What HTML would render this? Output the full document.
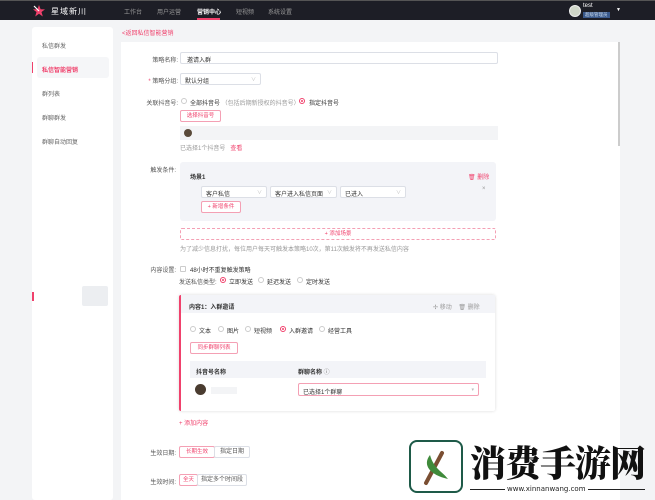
<!DOCTYPE html><html><head><meta charset="utf-8"><style>
*{margin:0;padding:0;box-sizing:border-box}
body{width:655px;height:500px;overflow:hidden;background:#f3f4f6;font-family:"Liberation Sans","Noto Sans CJK SC",sans-serif;font-size:6px;color:#333;position:relative}
.a{position:absolute;white-space:nowrap}
.hdr{left:0;top:0;width:655px;height:20px;background:#1d1e26;border-top:1px solid #555}
.nav{color:#999;top:7px;font-size:6px}
.box{position:absolute;border:1px solid #dcdfe6;background:#fff;border-radius:2px}
.pk{color:#f0416c}
.pbtn{position:absolute;border:1px solid #f4a0b4;color:#f0416c;background:#fff;border-radius:2px;text-align:center;font-size:5.5px}
.lbl{color:#555;text-align:right;width:60px}
.r{position:absolute;width:6px;height:6px;border:1px solid #ccc;border-radius:50%;background:#fff}
.r.on{border-color:#f0416c}
.r.on:after{content:"";position:absolute;left:1px;top:1px;width:2px;height:2px;border-radius:50%;background:#f0416c}
.car{position:absolute;right:4px;top:2px;color:#bbb;font-size:5px}
.g{color:#999}
</style></head><body>
<div class="a hdr"></div>
<svg class="a" style="left:32px;top:4px" width="14" height="14" viewBox="0 0 14 14"><polygon points="7,1 8.6,5.2 13,5.4 9.5,8 10.8,12.5 7,9.8 3.2,12.5 4.5,8 1,5.4 5.4,5.2" fill="#f0416c"/><path d="M2 2 L7 7" stroke="#fff" stroke-width="1.2"/></svg>
<div class="a" style="left:51px;top:6px;color:#fff;font-size:8px;letter-spacing:1px">星域新川</div>
<div class="a nav" style="left:124px">工作台</div>
<div class="a nav" style="left:157px">用户运营</div>
<div class="a nav" style="left:197px;color:#fff;font-weight:bold">营销中心</div>
<div class="a" style="left:197px;top:18px;width:23px;height:2px;background:#f0416c"></div>
<div class="a nav" style="left:236px">短视频</div>
<div class="a nav" style="left:268px">系统设置</div>
<div class="a" style="left:569px;top:5px;width:12px;height:12px;border-radius:50%;background:#cfd6c8;border:1px solid #eee"></div>
<div class="a" style="left:583px;top:3px;color:#fff;font-size:6px">test</div>
<div class="a" style="left:583px;top:12px;background:#3b5a8c;color:#cde;font-size:4.5px;padding:0 2px">超级管理员</div>
<div class="a" style="left:616px;top:7px;color:#fff;font-size:5px">▼</div>

<div class="a" style="left:32px;top:27px;width:81px;height:473px;background:#fff;border-radius:3px"></div>
<div class="a" style="left:37px;top:57px;width:72px;height:21px;background:#f5f6f8;border-radius:3px"></div>
<div class="a" style="left:32px;top:62px;width:1px;height:11px;background:#f0416c"></div>
<div class="a" style="left:42px;top:41px;color:#666">私信群发</div>
<div class="a pk" style="left:42px;top:65px;font-weight:bold">私信智能营销</div>
<div class="a" style="left:42px;top:89px;color:#666">群列表</div>
<div class="a" style="left:42px;top:113px;color:#666">群聊群发</div>
<div class="a" style="left:42px;top:137px;color:#666">群聊自动回复</div>
<div class="a" style="left:32px;top:292px;width:2px;height:9px;background:#f0416c"></div>
<div class="a" style="left:82px;top:286px;width:26px;height:20px;background:#eceef1;border-radius:2px"></div>

<div class="a pk" style="left:122px;top:28px">&lt;返回私信智能营销</div>
<div class="a" style="left:121px;top:42px;width:499px;height:458px;background:#fff"></div>
<div class="a" style="left:618px;top:42px;width:2px;height:104px;background:#ccc"></div>
<div class="a" style="left:620px;top:42px;width:35px;height:458px;background:#f3f4f6"></div>

<div class="a lbl" style="left:118px;top:55px">策略名称:</div>
<div class="box" style="left:180px;top:52px;width:318px;height:12px"><span class="a" style="left:6px;top:2px">邀请入群</span></div>
<div class="a lbl" style="left:118px;top:76px"><span class="pk">* </span>策略分组:</div>
<div class="box" style="left:180px;top:73px;width:81px;height:12px"><span class="a" style="left:4px;top:2px">默认分组</span><span class="car">∨</span></div>
<div class="a lbl" style="left:118px;top:98px">关联抖音号:</div>
<div class="r" style="left:181px;top:98px"></div>
<div class="a" style="left:190px;top:98px">全部抖音号 <span class="g">（包括后期新授权的抖音号）</span></div>
<div class="r on" style="left:299px;top:98px"></div>
<div class="a" style="left:309px;top:98px">指定抖音号</div>
<div class="pbtn" style="left:180px;top:110px;width:41px;height:12px;line-height:10px">选择抖音号</div>
<div class="a" style="left:180px;top:126px;width:318px;height:14px;background:#f3f4f6"></div>
<div class="a" style="left:184px;top:129px;width:8px;height:8px;border-radius:50%;background:#5a4a3a"></div>
<div class="a g" style="left:180px;top:143px">已选择1个抖音号 &nbsp; <span class="pk">查看</span></div>

<div class="a lbl" style="left:116px;top:165px">触发条件:</div>
<div class="a" style="left:180px;top:162px;width:316px;height:59px;background:#f3f4f8;border-radius:3px"></div>
<div class="a" style="left:190px;top:172px;font-weight:bold">场景1</div>
<div class="a pk" style="left:468px;top:172px">🗑 删除</div>
<div class="box" style="left:201px;top:186px;width:66px;height:12px"><span class="a" style="left:4px;top:2px">客户私信</span><span class="car">∨</span></div>
<div class="box" style="left:270px;top:186px;width:67px;height:12px"><span class="a" style="left:4px;top:2px">客户进入私信页面</span><span class="car">∨</span></div>
<div class="box" style="left:340px;top:186px;width:66px;height:12px"><span class="a" style="left:4px;top:2px">已进入</span><span class="car">∨</span></div>
<div class="a g" style="left:482px;top:186px">×</div>
<div class="pbtn" style="left:201px;top:201px;width:40px;height:12px;line-height:10px">+ 新增条件</div>
<div class="pbtn" style="left:180px;top:228px;width:316px;height:12px;line-height:10px;border-style:dashed">+ 添加场景</div>
<div class="a g" style="left:180px;top:244px">为了减少信息打扰，每位用户每天可触发本策略10次，第11次触发将不再发送私信内容</div>

<div class="a lbl" style="left:116px;top:265px">内容设置:</div>
<div class="a" style="left:180px;top:266px;width:6px;height:6px;border:1px solid #ccc;border-radius:1px"></div>
<div class="a" style="left:190px;top:265px">48小时不重复触发策略</div>
<div class="a" style="left:179px;top:277px;color:#555">发送私信类型:</div>
<div class="r on" style="left:220px;top:277px"></div><div class="a" style="left:229px;top:277px">立即发送</div>
<div class="r" style="left:258px;top:277px"></div><div class="a" style="left:267px;top:277px">延迟发送</div>
<div class="r" style="left:297px;top:277px"></div><div class="a" style="left:306px;top:277px">定时发送</div>

<div class="a" style="left:179px;top:295px;width:316px;height:116px;background:#fff;border-left:2px solid #f0416c;box-shadow:0 0 3px rgba(0,0,0,.15);border-radius:2px"></div>
<div class="a" style="left:181px;top:295px;width:314px;height:18px;background:#f3f4f8"></div>
<div class="a" style="left:189px;top:302px;font-weight:bold">内容1：入群邀请</div>
<div class="a g" style="left:433px;top:302px">✢ 移动 &nbsp;&nbsp; 🗑 删除</div>
<div class="r" style="left:190px;top:326px"></div><div class="a" style="left:199px;top:326px">文本</div>
<div class="r" style="left:218px;top:326px"></div><div class="a" style="left:227px;top:326px">图片</div>
<div class="r" style="left:245px;top:326px"></div><div class="a" style="left:254px;top:326px">短视频</div>
<div class="r on" style="left:280px;top:326px"></div><div class="a" style="left:289px;top:326px">入群邀请</div>
<div class="r" style="left:319px;top:326px"></div><div class="a" style="left:328px;top:326px">经营工具</div>
<div class="pbtn" style="left:190px;top:342px;width:48px;height:12px;line-height:10px">同步群聊列表</div>
<div class="a" style="left:190px;top:361px;width:296px;height:17px;background:#f3f4f8"></div>
<div class="a" style="left:196px;top:367px;font-weight:bold">抖音号名称</div>
<div class="a" style="left:298px;top:367px;font-weight:bold">群聊名称 <span class="g">ⓘ</span></div>
<div class="a" style="left:195px;top:384px;width:11px;height:11px;border-radius:50%;background:#4a3c30"></div>
<div class="a" style="left:211px;top:387px;width:26px;height:7px;background:#f3f4f6"></div>
<div class="a" style="left:298px;top:383px;width:181px;height:13px;border:1px solid #f4a0b4;border-radius:2px"><span class="a" style="left:4px;top:3px">已选择1个群聊</span><span class="car" style="top:3px">▾</span></div>
<div class="a pk" style="left:179px;top:418px">+ 添加内容</div>

<div class="a lbl" style="left:116px;top:448px">生效日期:</div>
<div class="pbtn" style="left:179px;top:446px;width:36px;height:12px;line-height:10px">长期生效</div>
<div class="box" style="left:214px;top:446px;width:36px;height:12px;text-align:center;line-height:10px;color:#555">指定日期</div>
<div class="a lbl" style="left:116px;top:477px">生效时间:</div>
<div class="pbtn" style="left:179px;top:474px;width:19px;height:12px;line-height:10px">全天</div>
<div class="box" style="left:197px;top:474px;width:50px;height:12px;text-align:center;line-height:10px;color:#555">指定多个时间段</div>

<div class="a" style="left:409px;top:440px;width:54px;height:53px;border:2px solid #1e5a48;border-radius:8px;background:#fff"></div>
<svg class="a" style="left:412px;top:443px" width="48" height="48" viewBox="0 0 48 48"><path d="M30 10 L14 40" stroke="#7a4e32" stroke-width="4" stroke-linecap="round"/><path d="M18 12 C10 22,18 32,36 36 C30 28,22 26,18 12Z" fill="#3f8a3a"/></svg>
<div class="a" style="left:470px;top:436px;font-family:'Noto Serif CJK SC',serif;font-size:36px;font-weight:900;color:#111;letter-spacing:-1px">消费手游网</div>
<div class="a" style="left:470px;top:489px;width:175px;height:1px;background:#222"></div>
<div class="a" style="left:505px;top:485px;background:#fff;padding:0 2px;font-size:7px;color:#222;font-family:'DejaVu Sans',sans-serif">www.xinnanwang.com</div>
</body></html>
